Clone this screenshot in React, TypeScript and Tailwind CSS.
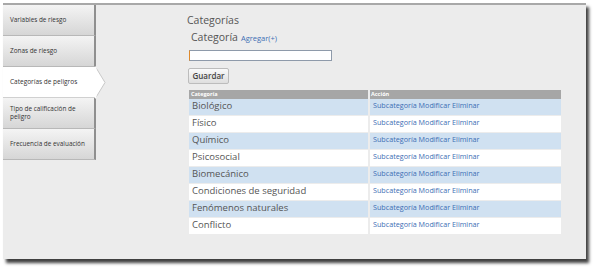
const tabs = [
  { label: 'Variables de riesgo', active: false },
  { label: 'Zonas de riesgo', active: false },
  { label: 'Categorías de peligros', active: true },
  { label: 'Tipo de calificación de peligro', active: false },
  { label: 'Frecuencia de evaluación', active: false },
];

const rows = [
  'Biológico',
  'Físico',
  'Químico',
  'Psicosocial',
  'Biomecánico',
  'Condiciones de seguridad',
  'Fenómenos naturales',
  'Conflicto',
];

const font = "font-['Open_Sans','DejaVu_Sans',sans-serif]";

export default function App() {
  return (
    <div className={`w-[600px] h-[273px] bg-white pl-[3px] pt-[3px] ${font}`}>
      <div className="w-[583px] h-[256px] bg-[#ececec] border-t-2 border-[#a8a8a8] shadow-[3px_4px_3px_rgba(0,0,0,0.75)] flex">
        <aside className="w-[93px] flex-shrink-0 flex flex-col">
          {tabs.map((t) =>
            t.active ? (
              <div key={t.label} className="relative h-[31px] bg-white border-b border-[#d0d0d0] flex items-center pl-[7px] text-[6.5px] text-[#333]">
                {t.label}
                <svg className="absolute left-[92px] -top-px" width="12" height="33" viewBox="0 0 12 33">
                  <polygon points="0,0 10,16.5 0,33" fill="#fff" stroke="#c8c8c8" strokeWidth="1" />
                  <rect x="0" y="1" width="1.5" height="31" fill="#fff" />
                </svg>
              </div>
            ) : (
              <div
                key={t.label}
                className="h-[31px] bg-gradient-to-b from-[#f4f4f4] to-[#d6d6d6] border-b border-[#b8b8b8] border-r-2 border-r-[#8f8f8f] flex items-center pl-[7px] pr-[4px] text-[6.4px] leading-[8px] text-[#333] whitespace-pre-line"
              >
                {t.label === 'Tipo de calificación de peligro' ? 'Tipo de calificación de\npeligro' : t.label}
              </div>
            ),
          )}
        </aside>
        <main className="flex-1 pl-[91px] pt-[8px] text-[#555]">
          <div className="text-[10.5px] leading-[14px]">Categorías</div>
          <div className="mt-[3px] pl-[4px] flex items-baseline gap-[3px]">
            <span className="text-[10.5px] text-[#555]">Categoría</span>
            <span className="text-[7.5px] text-[#3c6eb4]">Agregar(+)</span>
          </div>
          <div className="mt-[4px] ml-[2px] w-[143px] h-[11px] bg-white border border-[#8e9aaa] border-l-[#e08a2a]" />
          <button className="mt-[6px] ml-[1px] w-[41px] h-[16px] bg-gradient-to-b from-[#fafafa] to-[#dedede] border border-[#bcbcbc] rounded-[2px] text-[8px] text-[#444] font-semibold">
            Guardar
          </button>
          <table className="mt-[5px] ml-[2px] w-[372px] border-collapse">
            <thead>
              <tr className="bg-[#a6a6a6] text-white text-[5.5px] font-bold h-[9px]">
                <th className="text-left pl-[2px] w-[180px] border-r-2 border-[#ececec] leading-[9px]">Categoría</th>
                <th className="text-left pl-[1px] leading-[9px]">Acción</th>
              </tr>
            </thead>
            <tbody>
              {rows.map((r, i) => (
                <tr key={r} className={`${i % 2 === 0 ? 'bg-[#d0e1f1]' : 'bg-white'} h-[17px] border-b border-[#ececec]`}>
                  <td className="pl-[3px] text-[9.5px] text-[#555] align-top pt-[1px] leading-[12px] border-r-2 border-[#ececec]">{r}</td>
                  <td className="pl-[3px] text-[7.2px] text-[#3c6eb4] align-top pt-[1px] leading-[11px]">
                    Subcategoría Modificar Eliminar
                  </td>
                </tr>
              ))}
            </tbody>
          </table>
        </main>
      </div>
    </div>
  );
}
